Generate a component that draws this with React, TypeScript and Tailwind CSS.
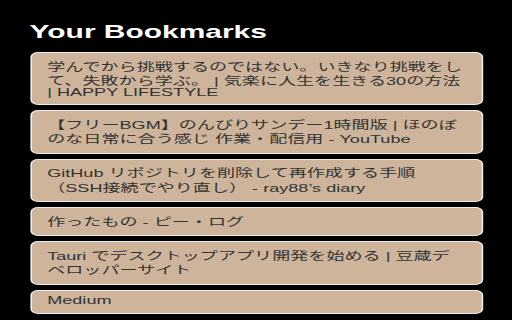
const bookmarks = [
  "学んでから挑戦するのではない。いきなり挑戦をして、失敗から学ぶ。 | 気楽に人生を生きる30の方法 | HAPPY LIFESTYLE",
  "【フリーBGM】のんびりサンデー1時間版 | ほのぼのな日常に合う感じ 作業・配信用 - YouTube",
  "GitHub リポジトリを削除して再作成する手順（SSH接続でやり直し） - ray88’s diary",
  "作ったもの - ピー・ログ",
  "Tauri でデスクトップアプリ開発を始める | 豆蔵デベロッパーサイト",
  "Medium",
];

// Japanese runs get a taller line than latin ones, as in the original popup
const CJK_RUN = /([\u3000-\u30ff\u3400-\u9fff\uff00-\uffef]+)/;

function BookmarkTitle({ text }: { text: string }) {
  return (
    <>
      {text.split(CJK_RUN).map((part, i) =>
        i % 2 === 1 ? (
          <span key={i} className="font-['Noto_Sans_CJK_JP',sans-serif] leading-[14.5px]">
            {part}
          </span>
        ) : (
          <span key={i} className="leading-[9.5px]">
            {part}
          </span>
        ),
      )}
    </>
  );
}

export default function App() {
  return (
    <div className="h-screen w-full overflow-hidden bg-black">
      {/* popup was laid out at 320px wide, then stretched across the window */}
      <div className="w-[320px] origin-top-left scale-x-[1.6] px-[18.5px] pt-[21px] font-['Liberation_Sans','Noto_Sans_CJK_JP',sans-serif]">
        <h3 className="mb-[9.5px] text-[18.72px] font-bold leading-[21.5px] text-white">
          Your Bookmarks
        </h3>
        <ul className="flex flex-col gap-[5px]">
          {bookmarks.map((title) => (
            <li
              key={title}
              className="rounded-[5px] border border-[#ececec] bg-[#cdb49b] px-[10px] pt-[5.5px] pb-[7px] text-[11.3px] leading-[9.5px] text-[#333333]"
            >
              <BookmarkTitle text={title} />
            </li>
          ))}
        </ul>
      </div>
    </div>
  );
}
